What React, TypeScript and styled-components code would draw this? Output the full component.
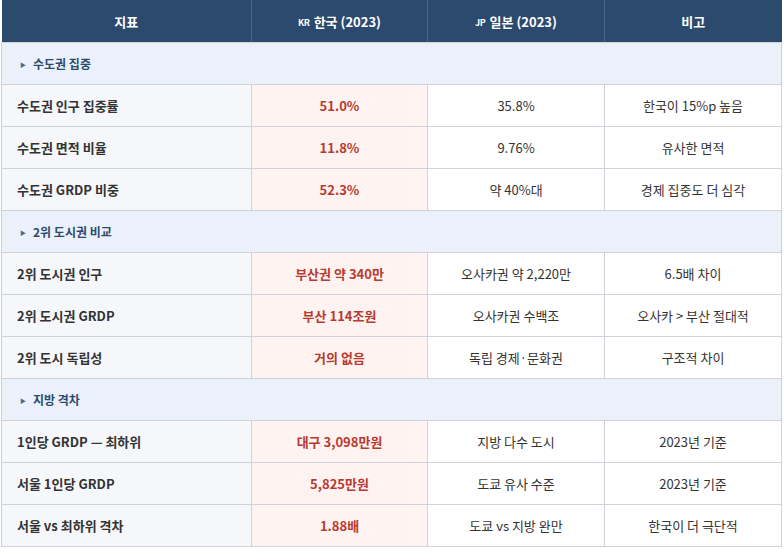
import React from 'react';
import styled, { createGlobalStyle } from 'styled-components';

const GlobalStyle = createGlobalStyle`
  html, body {
    margin: 0;
    padding: 0;
    background: #ffffff;
    font-family: "Noto Sans CJK KR", "Noto Sans", sans-serif;
  }
`;

const Wrapper = styled.div`
  padding: 0 1px;
`;

const Table = styled.table`
  width: 780px;
  border-collapse: collapse;
  table-layout: fixed;
  font-size: 13px;
  color: #333333;
`;

const HeadCell = styled.th`
  height: 42px;
  padding: 0 8px;
  background: #2c4a6e;
  color: #ffffff;
  font-weight: 700;
  font-size: 13px;
  text-align: center;
  vertical-align: middle;
  border-left: 1px solid #4a6688;
  border-bottom: 1px solid #d0d4da;

  &:first-child {
    border-left: none;
  }
`;

const Flag = styled.span`
  font-size: 9px;
  font-weight: 700;
  margin-right: 4px;
  vertical-align: 1px;
  letter-spacing: -0.3px;
`;

const SectionCell = styled.td`
  height: 41px;
  padding: 0 0 0 18px;
  background: #eaf1fb;
  color: #2c4a6e;
  font-weight: 700;
  font-size: 12px;
  border: 1px solid #cfd3d9;
  vertical-align: middle;
`;

const Marker = styled.span`
  display: inline-block;
  font-size: 6px;
  margin-right: 7px;
  vertical-align: 2px;
  color: #4f6a8a;
`;

type Kind = 'label' | 'kr' | 'plain';

const Cell = styled.td<{ $kind: Kind }>`
  height: 41px;
  padding: 0 15px;
  border: 1px solid #cfd3d9;
  vertical-align: middle;
  text-align: ${({ $kind }) => ($kind === 'label' ? 'left' : 'center')};
  font-weight: ${({ $kind }) => ($kind === 'plain' ? 400 : 700)};
  color: ${({ $kind }) => ($kind === 'kr' ? '#b83a30' : '#333333')};
  background: ${({ $kind }) =>
    $kind === 'label' ? '#f5f7fb' : $kind === 'kr' ? '#fff3f1' : '#ffffff'};
`;

type Row = [string, string, string, string];
type Section = { title: string; rows: Row[] };

const sections: Section[] = [
  {
    title: '수도권 집중',
    rows: [
      ['수도권 인구 집중률', '51.0%', '35.8%', '한국이 15%p 높음'],
      ['수도권 면적 비율', '11.8%', '9.76%', '유사한 면적'],
      ['수도권 GRDP 비중', '52.3%', '약 40%대', '경제 집중도 더 심각'],
    ],
  },
  {
    title: '2위 도시권 비교',
    rows: [
      ['2위 도시권 인구', '부산권 약 340만', '오사카권 약 2,220만', '6.5배 차이'],
      ['2위 도시권 GRDP', '부산 114조원', '오사카권 수백조', '오사카 > 부산 절대적'],
      ['2위 도시 독립성', '거의 없음', '독립 경제·문화권', '구조적 차이'],
    ],
  },
  {
    title: '지방 격차',
    rows: [
      ['1인당 GRDP — 최하위', '대구 3,098만원', '지방 다수 도시', '2023년 기준'],
      ['서울 1인당 GRDP', '5,825만원', '도쿄 유사 수준', '2023년 기준'],
      ['서울 vs 최하위 격차', '1.88배', '도쿄 vs 지방 완만', '한국이 더 극단적'],
    ],
  },
];

export default function App() {
  return (
    <Wrapper>
      <GlobalStyle />
      <Table>
        <colgroup>
          <col style={{ width: 250 }} />
          <col style={{ width: 176 }} />
          <col style={{ width: 177 }} />
          <col style={{ width: 177 }} />
        </colgroup>
        <thead>
          <tr>
            <HeadCell>지표</HeadCell>
            <HeadCell>
              <Flag>KR</Flag>한국 (2023)
            </HeadCell>
            <HeadCell>
              <Flag>JP</Flag>일본 (2023)
            </HeadCell>
            <HeadCell>비고</HeadCell>
          </tr>
        </thead>
        <tbody>
          {sections.map((section) => (
            <React.Fragment key={section.title}>
              <tr>
                <SectionCell colSpan={4}>
                  <Marker>▶</Marker>
                  {section.title}
                </SectionCell>
              </tr>
              {section.rows.map(([label, kr, jp, note]) => (
                <tr key={label}>
                  <Cell $kind="label">{label}</Cell>
                  <Cell $kind="kr">{kr}</Cell>
                  <Cell $kind="plain">{jp}</Cell>
                  <Cell $kind="plain">{note}</Cell>
                </tr>
              ))}
            </React.Fragment>
          ))}
        </tbody>
      </Table>
    </Wrapper>
  );
}
